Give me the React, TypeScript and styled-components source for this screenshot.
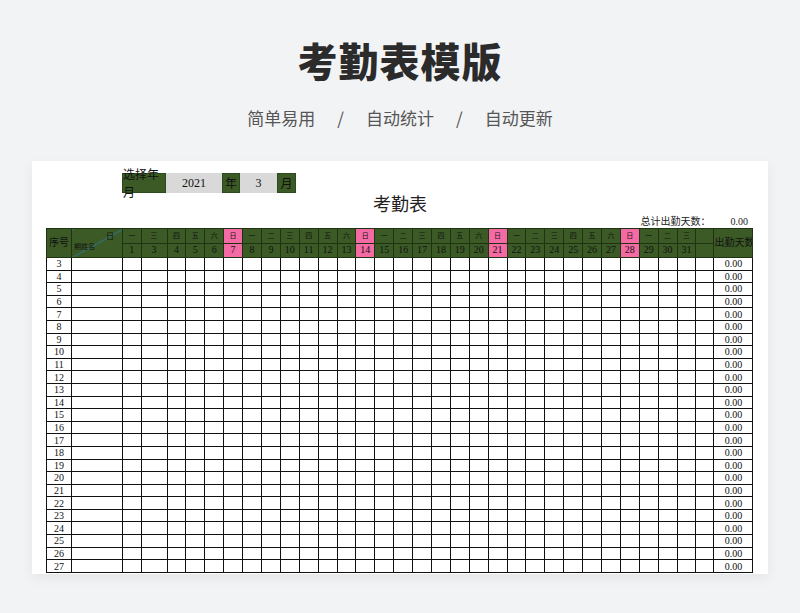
import React from 'react';
import styled, { createGlobalStyle } from 'styled-components';

const Global = createGlobalStyle`
  body { margin: 0; background: #f2f3f5; font-family: "Noto Sans CJK SC", "Noto Sans", sans-serif; }
`;

const days = [1, 3, 4, 5, 6, 7, 8, 9, 10, 11, 12, 13, 14, 15, 16, 17, 18, 19, 20, 21, 22, 23, 24, 25, 26, 27, 28, 29, 30, 31];
const week = ['一', '二', '三', '四', '五', '六', '日'];
const rows = Array.from({ length: 25 }, (_, i) => i + 3);
const dayWidth = (d: number) => (d === 3 ? 26 : d === 1 ? 18.5 : 18.9);

const Page = styled.div`
  width: 800px;
  height: 613px;
  overflow: hidden;
  display: flex;
  flex-direction: column;
  align-items: center;
`;

const Title = styled.h1`
  margin: 34px 0 0;
  font-size: 40px;
  font-weight: 900;
  color: #2b2b2b;
  letter-spacing: 1px;
  line-height: 52px;
`;

const Subtitle = styled.div`
  margin-top: 20px;
  font-size: 17px;
  color: #555;
  display: flex;
  gap: 22px;
  line-height: 24px;
`;

const Card = styled.div`
  margin-top: 31px;
  width: 736px;
  height: 413px;
  background: #fff;
  box-shadow: 0 4px 12px rgba(0, 0, 0, 0.06);
  padding: 12px 14px 0;
  box-sizing: border-box;
  overflow: hidden;
  font-family: "Liberation Serif", "Noto Sans CJK SC", serif;
`;

const Picker = styled.div`
  display: flex;
  margin-left: 76px;
  height: 20px;
  font-size: 12px;
`;

const PickCell = styled.div<{ $w: number; $green?: boolean }>`
  width: ${p => p.$w}px;
  display: flex;
  align-items: center;
  justify-content: center;
  background: ${p => (p.$green ? '#3b5a26' : '#d9d9d9')};
  color: #111;
  border: 1px solid ${p => (p.$green ? '#2d4a1c' : '#d9d9d9')};
  box-sizing: border-box;
`;

const SheetTitle = styled.div`
  text-align: center;
  font-size: 18px;
  line-height: 22px;
  margin-top: 1px;
  color: #222;
`;

const Total = styled.div`
  display: flex;
  justify-content: flex-end;
  gap: 20px;
  font-size: 10px;
  line-height: 12px;
  padding-right: 6px;
  color: #222;
`;

const Table = styled.table`
  border-collapse: collapse;
  table-layout: fixed;
  width: 706px;
  font-size: 10px;
  color: #111;
  td { border: 1px solid #111; padding: 0; text-align: center; overflow: hidden; white-space: nowrap; }
`;

const Head = styled.td<{ $pink?: boolean; $small?: boolean }>`
  && { background: ${p => (p.$pink ? '#f46aa4' : '#3b5a26')}; border-color: #1f3313; }
  height: 13.5px;
  font-size: ${p => (p.$small ? 7 : 10)}px;
  line-height: 12px;
`;

const Corner = styled(Head)`
  position: relative;
  background: linear-gradient(to bottom right, transparent calc(50% - 0.7px), #2d7fb0 50%, transparent calc(50% + 0.7px)), #3b5a26 !important;
`;

const CornerTop = styled.span`
  position: absolute;
  right: 8px;
  top: 2px;
  font-size: 8px;
`;

const CornerBottom = styled.span`
  position: absolute;
  left: 2px;
  bottom: 4px;
  font-size: 7px;
`;

const Cell = styled.td`
  height: 11.6px;
  line-height: 11px;
`;

export default function App() {
  return (
    <Page>
      <Global />
      <Title>考勤表模版</Title>
      <Subtitle>
        <span>简单易用</span><span>/</span><span>自动统计</span><span>/</span><span>自动更新</span>
      </Subtitle>
      <Card>
        <Picker>
          <PickCell $w={44} $green>选择年月</PickCell>
          <PickCell $w={56}>2021</PickCell>
          <PickCell $w={18} $green>年</PickCell>
          <PickCell $w={37}>3</PickCell>
          <PickCell $w={19} $green>月</PickCell>
        </Picker>
        <SheetTitle>考勤表</SheetTitle>
        <Total><span>总计出勤天数：</span><span>0.00</span></Total>
        <Table>
          <colgroup>
            <col style={{ width: 25 }} />
            <col style={{ width: 51 }} />
            {days.map(d => <col key={d} style={{ width: dayWidth(d) }} />)}
            <col style={{ width: 18 }} />
            <col style={{ width: 39 }} />
          </colgroup>
          <tbody>
            <tr>
              <Head rowSpan={2}>序号</Head>
              <Corner rowSpan={2}>
                <CornerTop>日</CornerTop>
                <CornerBottom>期姓名</CornerBottom>
              </Corner>
              {days.map(d => {
                const w = week[(d - 1) % 7];
                return <Head key={d} $small $pink={w === '日'}>{w}</Head>;
              })}
              <Head />
              <Head rowSpan={2}>出勤天数</Head>
            </tr>
            <tr>
              {days.map(d => (
                <Head key={d} $pink={d % 7 === 0}>{d}</Head>
              ))}
              <Head />
            </tr>
            {rows.map(r => (
              <tr key={r}>
                <Cell>{r}</Cell>
                <Cell />
                {days.map(d => <Cell key={d} />)}
                <Cell />
                <Cell>0.00</Cell>
              </tr>
            ))}
          </tbody>
        </Table>
      </Card>
    </Page>
  );
}
